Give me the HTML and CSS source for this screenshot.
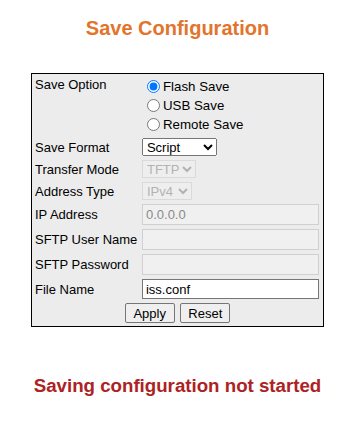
FILE: index.html
```html
<!DOCTYPE html>
<html lang="en">
<head>
  <meta charset="UTF-8">
  <meta name="viewport" content="width=device-width, initial-scale=1.0">
  <title>Save Configuration</title>
  <link rel="stylesheet" href="styles.css">
</head>
<body>
<h1 class="page-title">Save Configuration</h1>
<form class="save-form">
  <table class="config-table">
    <tr>
      <td class="label top">Save Option</td>
      <td>
        <label class="radio-line"><input type="radio" name="opt" checked>Flash Save</label>
        <label class="radio-line"><input type="radio" name="opt">USB Save</label>
        <label class="radio-line"><input type="radio" name="opt">Remote Save</label>
      </td>
    </tr>
    <tr>
      <td class="label">Save Format</td>
      <td>
        <select class="sel sel-format">
          <option>Script</option>
          <option>Binary</option>
        </select>
      </td>
    </tr>
    <tr>
      <td class="label">Transfer Mode</td>
      <td><select class="sel sel-mode" disabled><option>TFTP</option></select></td>
    </tr>
    <tr>
      <td class="label">Address Type</td>
      <td><select class="sel sel-addr" disabled><option>IPv4</option></select></td>
    </tr>
    <tr>
      <td class="label">IP Address</td>
      <td><input type="text" class="field" value="0.0.0.0" disabled></td>
    </tr>
    <tr>
      <td class="label">SFTP User Name</td>
      <td><input type="text" class="field" disabled></td>
    </tr>
    <tr>
      <td class="label">SFTP Password</td>
      <td><input type="password" class="field" disabled></td>
    </tr>
    <tr>
      <td class="label">File Name</td>
      <td><input type="text" class="field file" value="iss.conf"></td>
    </tr>
    <tr>
      <td colspan="2" class="actions">
        <button type="button" class="btn">Apply</button>
        <button type="reset" class="btn">Reset</button>
      </td>
    </tr>
  </table>
</form>
<p class="status">Saving configuration not started</p>
</body>
</html>
```
FILE: styles.css
```css
body {
  font-family: "Liberation Sans", Arial, sans-serif;
  margin: 8px 13px 8px 8px;
  background: #fff;
  color: #000;
}
.page-title {
  font-size: 20px;
  font-weight: bold;
  color: #e2742b;
  text-align: center;
  line-height: 23px;
  margin: 9px 0 0;
}
.save-form {
  margin: 33px 0 0;
}
.config-table {
  margin: 0 auto;
  width: 293px;
  border: 1px solid #000;
  border-spacing: 2px;
  background: #ececec;
  font-size: 13px;
}
.config-table td {
  padding: 1px;
  white-space: nowrap;
}
.label {
  vertical-align: middle;
}
.label.top {
  vertical-align: top;
}
.radio-line {
  display: block;
  height: 19px;
  line-height: 19px;
  font-size: 13.3px;
}
.radio-line input {
  margin: 0 3px 0 5px;
  width: 13px;
  height: 13px;
  vertical-align: -2px;
}
.sel {
  font-family: "Liberation Sans", Arial, sans-serif;
  font-size: 13px;
  height: 18px;
  padding: 0;
  margin: 0;
  display: block;
}
.sel-format { width: 75px; }
.sel-mode { width: 54px; }
.sel-addr { width: 50px; }
.sel:disabled {
  color: #9a9a9a;
  background: #f0f0f0;
  border: 1px solid #d3d3d3;
}
.field {
  font-family: "Liberation Sans", Arial, sans-serif;
  font-size: 13px;
  box-sizing: border-box;
  width: 177px;
  height: 21px;
  margin: 0;
  padding: 1px 3px;
  display: block;
  border: 1px solid #767676;
  background: #fff;
  color: #000;
}
.field:disabled {
  background: #f0f0f0;
  border: 1px solid #d0d0d0;
  color: #8a8a8a;
}
.field.file {
  height: 20px;
}
.actions {
  text-align: center;
}
.btn {
  font-family: "Liberation Sans", Arial, sans-serif;
  font-size: 13px;
  width: 50px;
  height: 20px;
  padding: 0;
  margin: 0 1px;
  border: 1px solid #767676;
  border-radius: 2px;
  background: #efefef;
  color: #000;
}
.status {
  font-size: 18.7px;
  font-weight: bold;
  color: #ad2222;
  text-align: center;
  line-height: 21px;
  margin: 48px 0 0;
}
```
